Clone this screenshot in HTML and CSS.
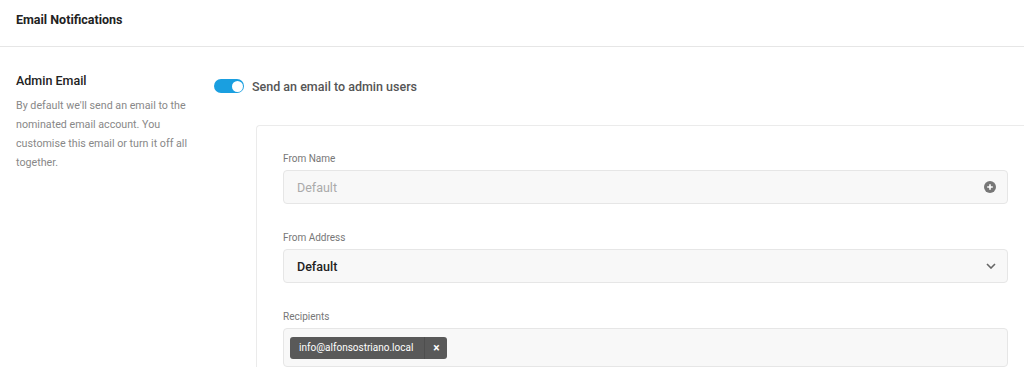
FILE: index.html
```html
<!DOCTYPE html>
<html lang="en">
<head>
    <meta charset="UTF-8">
    <meta name="viewport" content="width=device-width, initial-scale=1.0">
    <title>Email Notifications</title>
    <link rel="stylesheet" href="styles.css">
</head>
<body>
    <header class="page-header">
        <h1>Email Notifications</h1>
    </header>

    <section class="setting">
        <div class="setting-info">
            <h2>Admin Email</h2>
            <p>By default we'll send an email to the nominated email account. You customise this email or turn it off all together.</p>
        </div>

        <div class="setting-body">
            <label class="toggle-row">
                <span class="toggle is-on"><span class="knob"></span></span>
                <span class="toggle-label">Send an email to admin users</span>
            </label>

            <div class="card">
                <div class="field">
                    <div class="field-label">From Name</div>
                    <div class="input">
                        <span class="placeholder">Default</span>
                        <!-- bouton pour insérer une variable -->
                        <svg class="icon" width="12" height="12" viewBox="0 0 12 12">
                            <circle cx="6" cy="6" r="6" fill="#777"/>
                            <path d="M6 3.2v5.6M3.2 6h5.6" stroke="#fff" stroke-width="1.6"/>
                        </svg>
                    </div>
                </div>

                <div class="field">
                    <div class="field-label">From Address</div>
                    <div class="input select">
                        <span class="value">Default</span>
                        <svg class="icon" width="10" height="6" viewBox="0 0 10 6">
                            <path d="M1 1l4 4 4-4" fill="none" stroke="#666" stroke-width="1.6"/>
                        </svg>
                    </div>
                </div>

                <div class="field">
                    <div class="field-label">Recipients</div>
                    <div class="input tags">
                        <span class="tag">
                            <span class="tag-text">info@alfonsostriano.local</span>
                            <span class="tag-remove">&times;</span>
                        </span>
                    </div>
                </div>
            </div>
        </div>
    </section>
</body>
</html>
```

FILE: styles.css
```css
body {
    margin: 0;
    padding: 0;
    background: #fff;
    font-family: Roboto, "Liberation Sans", sans-serif;
    color: #333;
    overflow: hidden;
}

.page-header {
    padding: 0 16px 7px;
    border-bottom: 1px solid #e6e6e6;
}

.page-header h1 {
    margin: 0;
    font-size: 12.5px;
    font-weight: 700;
    line-height: 39px;
    color: #222;
}

.setting {
    display: flex;
    padding: 24px 0 0 16px;
}

.setting-info {
    width: 198px;
    flex-shrink: 0;
}

.setting-info h2 {
    margin: 0;
    font-size: 12.5px;
    font-weight: 500;
    line-height: 20px;
    color: #222;
}

.setting-info p {
    max-width: 176px;
    margin: 5px 0 0;
    font-size: 10.7px;
    line-height: 19px;
    color: #888;
}

.setting-body {
    flex-shrink: 0;
}

.toggle-row {
    display: flex;
    align-items: center;
    gap: 8px;
    height: 30px;
}

.toggle {
    position: relative;
    width: 30px;
    height: 14px;
    border-radius: 7px;
    background: #d6d6d6;
}

.toggle.is-on {
    background: #1a9fe0;
}

.toggle .knob {
    position: absolute;
    top: 1.5px;
    left: 1.5px;
    width: 11px;
    height: 11px;
    border-radius: 50%;
    background: #fff;
}

.toggle.is-on .knob {
    left: 17.5px;
}

.toggle-label {
    font-size: 12.5px;
    font-weight: 500;
    color: #555;
}

.card {
    width: 725px;
    margin: 24px 0 0 42px;
    padding: 25px 26px 0;
    border: 1px solid #ebebeb;
    border-right: none;
    border-bottom: none;
    border-radius: 4px 0 0 0;
}

.field {
    margin-bottom: 26px;
}

.field-label {
    font-size: 10px;
    line-height: 16px;
    color: #777;
    margin-bottom: 3px;
}

.input {
    display: flex;
    align-items: center;
    justify-content: space-between;
    box-sizing: border-box;
    height: 34px;
    padding: 0 11px 0 13px;
    background: #f8f8f8;
    border: 1px solid #e6e6e6;
    border-radius: 4px;
    font-size: 12.5px;
}

.placeholder {
    color: #aaa;
}

.select .value {
    font-weight: 500;
    color: #222;
}

.tags {
    height: 39px;
    padding: 0 6px;
}

.tag {
    display: flex;
    align-items: stretch;
    height: 22px;
    background: #595959;
    border-radius: 3px;
    color: #fff;
    font-size: 10px;
    line-height: 22px;
}

.tag-text {
    padding: 0 11px 0 9px;
}

.tag-remove {
    width: 22px;
    text-align: center;
    border-left: 1px solid #4e4e4e;
    font-size: 12px;
    font-weight: 700;
}
```
